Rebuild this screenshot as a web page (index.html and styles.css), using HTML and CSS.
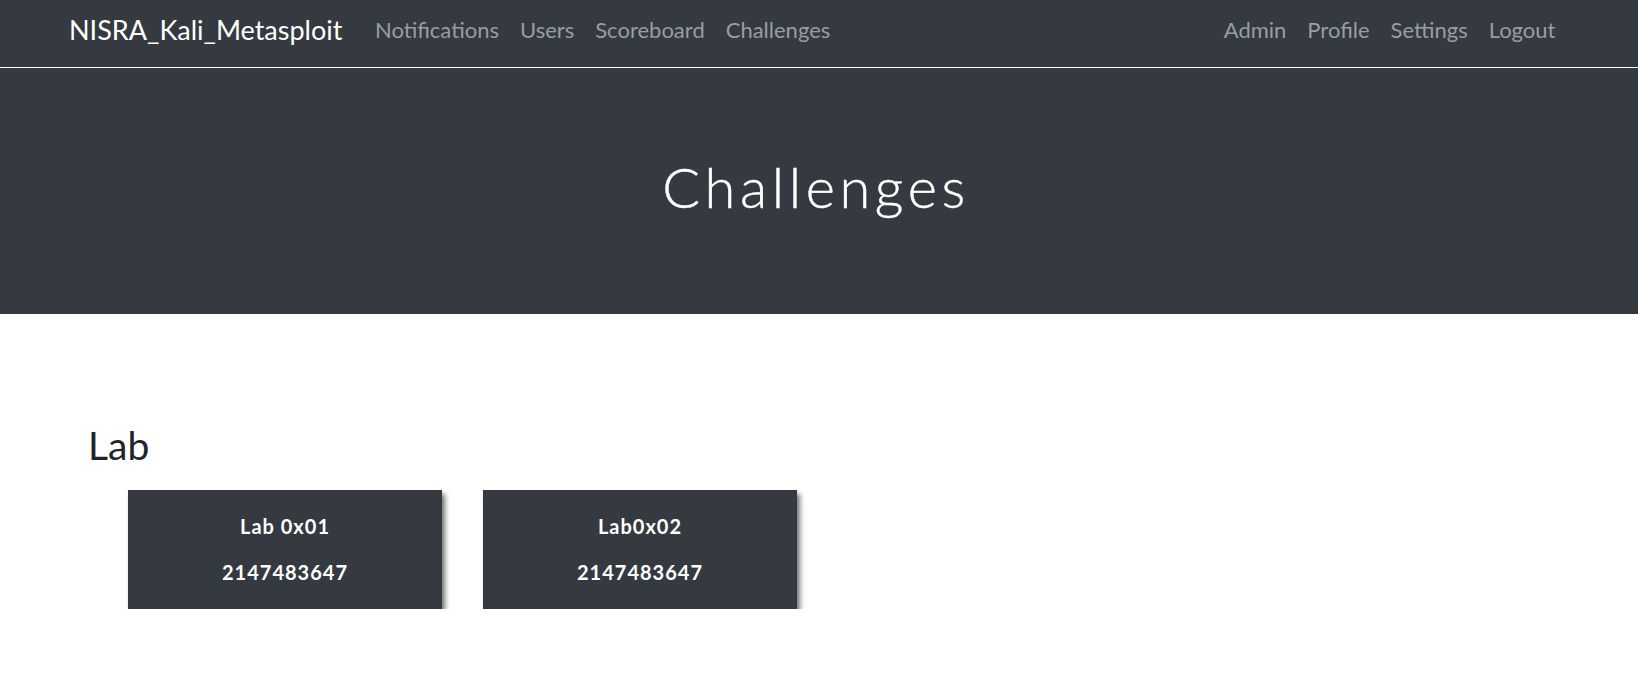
FILE: index.html
```html
<!DOCTYPE html>
<html lang="en">
<head>
  <meta charset="UTF-8">
  <meta name="viewport" content="width=device-width, initial-scale=1.0">
  <title>Challenges</title>
  <link rel="stylesheet" href="styles.css">
</head>
<body>
  <nav class="navbar">
    <div class="nav-container">
      <a class="brand" href="#">NISRA_Kali_Metasploit</a>
      <ul class="nav-links">
        <li><a href="#">Notifications</a></li>
        <li><a href="#">Users</a></li>
        <li><a href="#">Scoreboard</a></li>
        <li><a href="#">Challenges</a></li>
      </ul>
      <ul class="nav-links nav-right">
        <li><a href="#">Admin</a></li>
        <li><a href="#">Profile</a></li>
        <li><a href="#">Settings</a></li>
        <li><a href="#">Logout</a></li>
      </ul>
    </div>
  </nav>

  <div class="jumbotron">
    <h1>Challenges</h1>
  </div>

  <div class="content">
    <h3 class="category">Lab</h3>
    <div class="board">
      <div class="chal-card">
        <p>Lab 0x01</p>
        <span>2147483647</span>
      </div>
      <div class="chal-card">
        <p>Lab0x02</p>
        <span>2147483647</span>
      </div>
    </div>
  </div>
</body>
</html>
```

FILE: styles.css
```css
body {
  margin: 0;
  font-family: Lato, "Open Sans", sans-serif;
  color: #212529;
  background-color: #fff;
}

a {
  text-decoration: none;
}

.navbar {
  background-color: #343a40;
  border-bottom: 1px solid #fff;
}

.nav-container {
  display: flex;
  align-items: center;
  height: 67px;
  padding: 0 72px 8px 69px;
  box-sizing: border-box;
}

.brand {
  color: #fff;
  font-size: 27px;
  margin-right: 22px;
  white-space: nowrap;
}

.nav-links {
  display: flex;
  list-style: none;
  margin: 0;
  padding: 0;
}

.nav-links a {
  display: block;
  padding: 0 10.5px;
  color: #9a9da0;
  font-size: 22px;
}

.nav-right {
  margin-left: auto;
}

.jumbotron {
  background-color: #343a40;
  height: 246px;
  display: flex;
  align-items: center;
  justify-content: center;
  padding-bottom: 10px;
  box-sizing: border-box;
}

.jumbotron h1 {
  margin: 0 0 0 -6px;
  color: #fff;
  font-weight: 300;
  font-size: 56px;
  letter-spacing: 4.6px;
  -webkit-text-stroke: 0.4px #fff;
}

.content {
  padding: 108px 88px 0;
}

.category {
  margin: 0 0 22px;
  font-weight: 400;
  font-size: 39px;
}

.board {
  display: flex;
  gap: 41px;
  padding-left: 40px;
}

.chal-card {
  width: 314px;
  height: 119px;
  background-color: #343a40;
  color: #fff;
  text-align: center;
  font-weight: 700;
  font-size: 20px;
  letter-spacing: 1px;
  box-shadow: 3px 4px 5px rgba(0, 0, 0, 0.55);
  box-sizing: border-box;
  padding-top: 24px;
}

.chal-card p {
  margin: 0 0 22px;
}
```
